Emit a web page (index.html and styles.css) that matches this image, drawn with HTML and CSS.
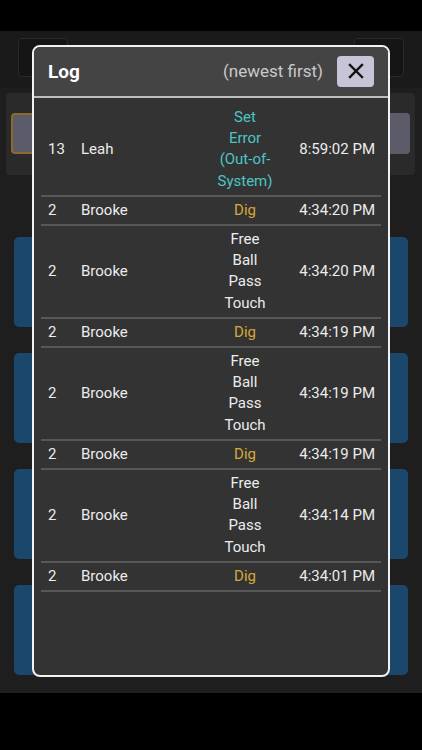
FILE: index.html
```html
<!DOCTYPE html>
<html lang="en">
<head>
    <meta charset="UTF-8">
    <meta name="viewport" content="width=device-width, initial-scale=1.0">
    <title>Log</title>
    <link rel="stylesheet" href="styles.css">
</head>
<body>
    <div class="screen">
        <div class="status-bar"></div>

        <div class="app">
            <div class="app-header">
                <div class="hdr-btn"></div>
                <div class="hdr-btn"></div>
            </div>

            <div class="panel">
                <div class="pill pill-active"></div>
                <div class="pill pill-right"></div>
            </div>

            <div class="cards">
                <div class="card"></div>
                <div class="card"></div>
                <div class="card"></div>
                <div class="card"></div>
            </div>
        </div>

        <div class="nav-bar"></div>

        <!-- log dialog -->
        <div class="modal">
            <div class="modal-header">
                <span class="modal-title">Log</span>
                <span class="modal-sub">(newest first)</span>
                <button class="close-btn" aria-label="Close">
                    <svg width="16" height="16" viewBox="0 0 16 16">
                        <path d="M2 2 L14 14 M14 2 L2 14" stroke="#111" stroke-width="2.4" stroke-linecap="square"/>
                    </svg>
                </button>
            </div>

            <div class="log">
                <div class="row">
                    <span class="num">13</span>
                    <span class="name">Leah</span>
                    <span class="action teal">Set Error (Out-of-System)</span>
                    <span class="time">8:59:02 PM</span>
                </div>
                <div class="row">
                    <span class="num">2</span>
                    <span class="name">Brooke</span>
                    <span class="action gold">Dig</span>
                    <span class="time">4:34:20 PM</span>
                </div>
                <div class="row">
                    <span class="num">2</span>
                    <span class="name">Brooke</span>
                    <span class="action">Free Ball Pass Touch</span>
                    <span class="time">4:34:20 PM</span>
                </div>
                <div class="row">
                    <span class="num">2</span>
                    <span class="name">Brooke</span>
                    <span class="action gold">Dig</span>
                    <span class="time">4:34:19 PM</span>
                </div>
                <div class="row">
                    <span class="num">2</span>
                    <span class="name">Brooke</span>
                    <span class="action">Free Ball Pass Touch</span>
                    <span class="time">4:34:19 PM</span>
                </div>
                <div class="row">
                    <span class="num">2</span>
                    <span class="name">Brooke</span>
                    <span class="action gold">Dig</span>
                    <span class="time">4:34:19 PM</span>
                </div>
                <div class="row">
                    <span class="num">2</span>
                    <span class="name">Brooke</span>
                    <span class="action">Free Ball Pass Touch</span>
                    <span class="time">4:34:14 PM</span>
                </div>
                <div class="row">
                    <span class="num">2</span>
                    <span class="name">Brooke</span>
                    <span class="action gold">Dig</span>
                    <span class="time">4:34:01 PM</span>
                </div>
            </div>
        </div>
    </div>
</body>
</html>
```

FILE: styles.css
```css
body {
    margin: 0;
    background-color: #000;
    font-family: Roboto, "Noto Sans", sans-serif;
}
.screen {
    position: relative;
    width: 422px;
    height: 750px;
    overflow: hidden;
    display: flex;
    flex-direction: column;
}
.status-bar {
    height: 31px;
    background-color: #000;
}
.nav-bar {
    flex: 1;
    background-color: #000;
}
.app {
    height: 662px;
    background-color: #1e1e1e;
    display: flex;
    flex-direction: column;
}
.app-header {
    height: 57px;
    background-color: #1a1a1a;
    display: flex;
    justify-content: space-between;
    align-items: flex-start;
    padding: 7px 18px 0 18px;
    box-sizing: border-box;
}
.hdr-btn {
    width: 50px;
    height: 39px;
    border: 1px solid #2a2a2a;
    border-radius: 4px;
    background-color: #151515;
    box-sizing: border-box;
}
.panel {
    margin: 5px 7px 0 6px;
    height: 82px;
    background-color: #2a2a2a;
    border-radius: 4px;
    display: flex;
    justify-content: space-between;
    align-items: flex-start;
    padding: 20px 5px 0 5px;
    box-sizing: border-box;
}
.pill {
    width: 110px;
    height: 41px;
    border-radius: 4px;
    background-color: #5c5b69;
    box-sizing: border-box;
}
.pill-active {
    border: 2px solid #8b6b2c;
}
.cards {
    display: flex;
    flex-direction: column;
    gap: 26px;
    padding: 62px 14px 0 14px;
}
.card {
    height: 90px;
    border-radius: 5px;
    background-color: #1b476d;
}

/* dialog */
.modal {
    position: absolute;
    left: 32px;
    top: 45px;
    width: 358px;
    height: 632px;
    box-sizing: border-box;
    border: 2px solid #f2f2f2;
    border-radius: 8px;
    background-color: #333;
    overflow: hidden;
    color: #ececec;
}
.modal-header {
    height: 51px;
    background-color: #444;
    border-bottom: 2px solid #bdbdbd;
    box-sizing: border-box;
    display: flex;
    align-items: center;
    padding: 0 14px 1px 14px;
}
.modal-title {
    font-size: 19px;
    font-weight: 700;
    color: #fff;
    flex: 1;
}
.modal-sub {
    font-size: 17px;
    color: #c9c9c9;
    margin-right: 14px;
}
.close-btn {
    width: 37px;
    height: 31px;
    border: none;
    border-radius: 4px;
    background-color: #c8c4d8;
    display: flex;
    align-items: center;
    justify-content: center;
    padding: 0;
}
.log {
    padding: 6px 7px 0 7px;
}
.row {
    display: grid;
    grid-template-columns: 33px 1fr 56px 102px;
    align-items: center;
    padding: 3px 6px 3px 7px;
    border-bottom: 2px solid #575757;
    font-size: 15px;
    line-height: 21.2px;
}
.action {
    text-align: center;
}
.time {
    text-align: right;
}
.teal {
    color: #4cc5c4;
}
.gold {
    color: #d6a73a;
}
```
